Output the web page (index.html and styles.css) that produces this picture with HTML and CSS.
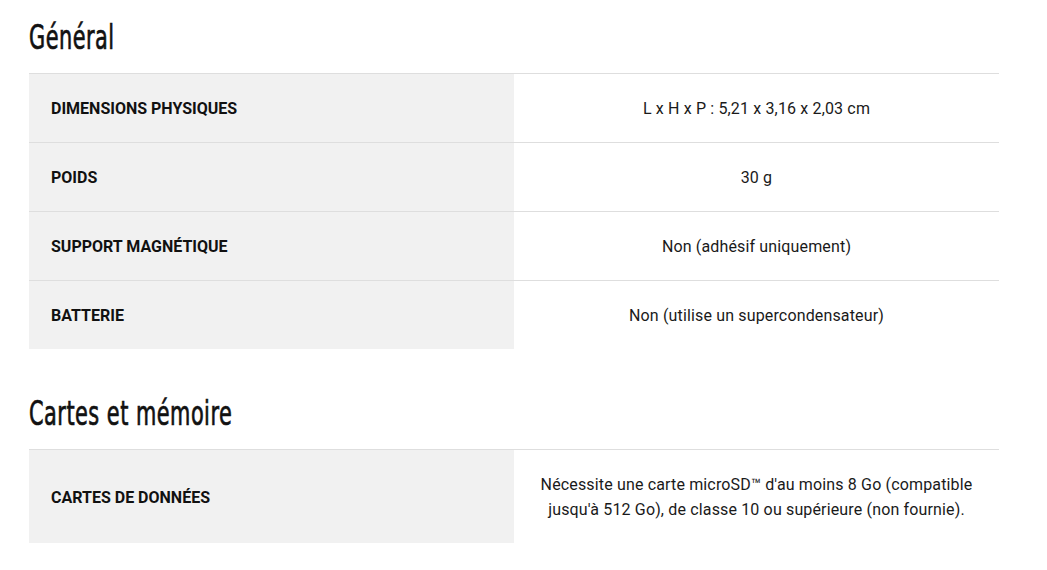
FILE: index.html
```html
<!DOCTYPE html>
<html lang="fr">
<head>
<meta charset="utf-8">
<link rel="stylesheet" href="styles.css">
</head>
<body>
<main class="specs">
  <section class="group">
    <h2 class="group-title">Général</h2>
    <div class="table">
      <div class="row">
        <div class="label">DIMENSIONS PHYSIQUES</div>
        <div class="value">L x H x P : 5,21 x 3,16 x 2,03 cm</div>
      </div>
      <div class="row">
        <div class="label">POIDS</div>
        <div class="value">30 g</div>
      </div>
      <div class="row">
        <div class="label">SUPPORT MAGNÉTIQUE</div>
        <div class="value">Non (adhésif uniquement)</div>
      </div>
      <div class="row">
        <div class="label">BATTERIE</div>
        <div class="value">Non (utilise un supercondensateur)</div>
      </div>
    </div>
  </section>
  <section class="group">
    <h2 class="group-title">Cartes et mémoire</h2>
    <div class="table">
      <div class="row">
        <div class="label">CARTES DE DONNÉES</div>
        <div class="value">Nécessite une carte microSD™ d'au moins 8 Go (compatible<br>jusqu'à 512 Go), de classe 10 ou supérieure (non fournie).</div>
      </div>
    </div>
  </section>
</main>
</body>
</html>
```
FILE: styles.css
```css
* { box-sizing: border-box; }
html, body { margin: 0; padding: 0; background: #fff; }
body {
  font-family: Roboto, "Liberation Sans", sans-serif;
  color: #1a1a1a;
}
.specs {
  width: 970px;
  margin-left: 29px;
  padding-top: 17px;
}
.group-title {
  margin: 0;
  height: 56px;
  font-family: "DejaVu Sans Condensed", "Liberation Sans", sans-serif;
  font-weight: 400;
  font-size: 29px;
  line-height: 36px;
  letter-spacing: 0.6px;
  color: #111;
  -webkit-text-stroke: 0.6px #111;
  transform: scale(0.8, 1.15);
  transform-origin: left top;
}
.group + .group { margin-top: 44px; }
.table {
  border-top: 1px solid #dedede;
}
.row {
  display: grid;
  grid-template-columns: 485px 1fr;
}
.row + .row { border-top: 1px solid #dedede; }
.label {
  background: #f1f1f1;
  padding: 22px 22px 21px;
  font-size: 16px;
  font-weight: 700;
  line-height: 25px;
  color: #111;
  display: flex;
  align-items: center;
}
.value {
  padding: 22px 22px 21px;
  font-size: 16px;
  line-height: 25px;
  letter-spacing: 0.15px;
  text-align: center;
  display: flex;
  align-items: center;
  justify-content: center;
  color: #1a1a1a;
}
```
